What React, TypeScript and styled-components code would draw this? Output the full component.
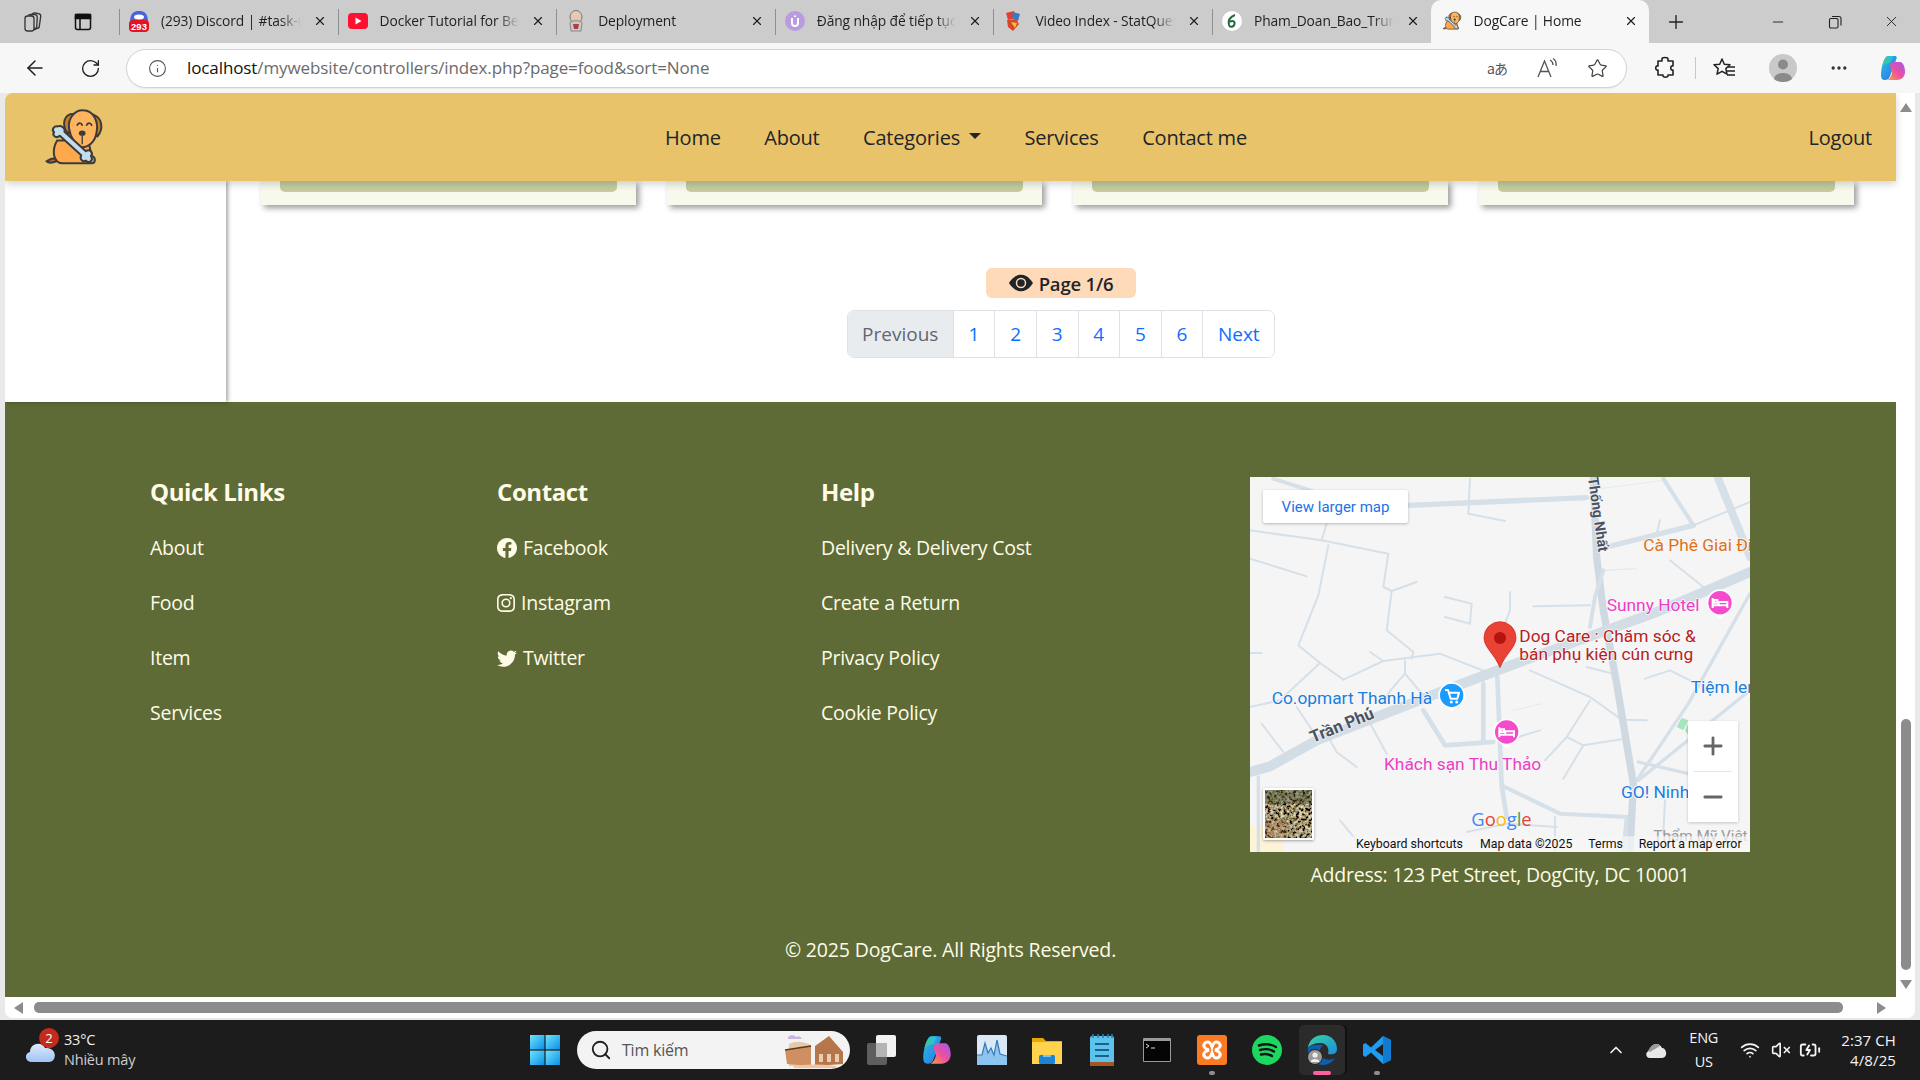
import React from 'react';
import styled, { createGlobalStyle } from 'styled-components';
import { ArrowLeft, RotateCw, Info, Star, Plus, Minus, X, MoreHorizontal, Search, ChevronUp, Wifi, VolumeX, BatteryCharging } from 'lucide-react';
import { BsEyeFill, BsFacebook, BsInstagram, BsTwitter } from 'react-icons/bs';

const UI = `"Open Sans", "Noto Sans", "Noto Sans CJK SC", sans-serif`;

const Global = createGlobalStyle`
  html, body { margin: 0; padding: 0; width: 1920px; height: 1080px; overflow: hidden; background: #1c1c1c; }
  * { box-sizing: border-box; }
`;

const Root = styled.div`
  width: 1920px; height: 1080px; display: flex; flex-direction: column;
  font-family: ${UI}; background: #e9e9e9; overflow: hidden;
`;

/* ---------- tab strip ---------- */
const TabStrip = styled.div`
  height: 43px; background: #cccccc; display: flex; align-items: stretch; flex: none;
`;
const StripTools = styled.div`
  width: 119px; display: flex; align-items: center; padding-left: 22px; gap: 30px; color: #222;
`;
const Tab = styled.div<{ $active?: boolean }>`
  width: 218.6px; display: flex; align-items: center; flex: none;
  padding: 0 11px 2px ${p => (p.$active ? 11 : 10)}px;
  gap: 12px;
  background: ${p => (p.$active ? '#f7f7f7' : 'transparent')};
  border-radius: ${p => (p.$active ? '10px 10px 0 0' : '0')};
  position: relative;
  &::before {
    content: ''; display: ${p => (p.$active ? 'none' : 'block')};
    position: absolute; left: 0; top: 9px; bottom: 8px; width: 1px; background: #8e8e8e;
  }
`;
const TabIcon = styled.span`
  width: 20px; height: 22px; flex: none; display: flex; align-items: center; justify-content: center;
`;
const TabTitle = styled.span`
  flex: 1; min-width: 0; white-space: nowrap; overflow: hidden; font-size: 13.8px; color: #1f1f1f; letter-spacing: -0.1px;
  -webkit-mask-image: linear-gradient(to right, #000 85%, transparent 100%);
`;
const TabClose = styled(X)`
  width: 14px; height: 14px; flex: none; color: #1f1f1f; stroke-width: 2;
`;
const NewTab = styled.div`
  margin-left: 11px; width: 32px; display: flex; align-items: center; justify-content: center; color: #222;
`;
const WindowControls = styled.div`
  margin-left: auto; display: flex;
`;
const WinBtn = styled.div`
  width: 57px; display: flex; align-items: center; justify-content: center; color: #222;
`;

/* ---------- toolbar ---------- */
const Toolbar = styled.div`
  height: 50px; background: #f7f7f7; display: flex; align-items: center; padding-left: 12px; flex: none;
`;
const NavBtn = styled.div<{ $ml?: number }>`
  width: 46px; display: flex; justify-content: center; margin-left: ${p => p.$ml ?? 0}px; color: #1f1f1f;
`;
const Omnibox = styled.div`
  margin-left: 13px; width: 1501px; height: 39px; border: 1px solid #d2d2d2; border-radius: 20px; background: #fff;
  display: flex; align-items: center; padding: 0 14px 0 21px; box-shadow: 0 1px 1px rgba(0,0,0,.05);
`;
const Url = styled.div`
  margin-left: 20px; flex: 1; font-size: 17px; color: #6b6b6b; letter-spacing: -0.1px; white-space: nowrap; padding-bottom: 2px;
  b { font-weight: 400; color: #111; }
`;
const OmniActions = styled.div`
  display: flex; gap: 20px; align-items: center;
`;
const Slot = styled.div<{ $ml?: number }>`
  width: 30px; height: 30px; display: flex; align-items: center; justify-content: center; flex: none;
  margin-left: ${p => p.$ml ?? 0}px; color: #333;
`;
const TranslateGlyph = styled.span`
  font-size: 14px; color: #555; font-family: "Noto Sans CJK JP", "Open Sans", sans-serif; letter-spacing: -1px;
`;
const ToolSep = styled.div`
  width: 1px; height: 22px; background: #c8c8c8; margin-left: 15px; flex: none;
`;

/* ---------- viewport ---------- */
const Viewport = styled.div`
  margin-left: 5px; width: 1910px; height: 925px; flex: none; background: #fff; border-radius: 8px 0 8px 8px;
  display: flex; flex-direction: column; overflow: hidden;
`;
const ViewportRow = styled.div`
  flex: 1; display: flex; min-height: 0;
`;
const Page = styled.div`
  width: 1891px; flex: none; display: flex; flex-direction: column;
`;
const Navbar = styled.nav`
  height: 88px; flex: none; background: #e8c36a; display: flex; align-items: center; padding: 0 24px 0 38px;
  position: relative; z-index: 2; box-shadow: 0 3px 8px rgba(0,0,0,.18);
`;
const NavLinks = styled.div`
  margin-left: 560px; display: flex; align-items: center; gap: 43.5px;
`;
const NavLink = styled.a`
  font-size: 20px; font-weight: 500; color: #212529; white-space: nowrap; display: flex; align-items: center; letter-spacing: -0.2px;
`;
const Caret = styled.span`
  margin-left: 9px; width: 0; height: 0; border-left: 6px solid transparent; border-right: 6px solid transparent; border-top: 6px solid #212529; margin-top: -2px;
`;
const Logout = styled(NavLink)`
  margin-left: auto;
`;

const Main = styled.div`
  height: 221px; flex: none; display: flex;
`;
const Sidebar = styled.aside`
  width: 221px; flex: none; background: #fff; box-shadow: 2px 0 4px rgba(0,0,0,.35); position: relative; z-index: 1;
`;
const Content = styled.div`
  flex: 1; display: flex; flex-direction: column; align-items: center; background: #fff;
`;
const Cards = styled.div`
  align-self: stretch; display: flex; gap: 31px; padding-left: 35px; height: 24px; flex: none;
`;
const Card = styled.div`
  width: 375px; height: 24px; background: #f7f9ec; box-shadow: 3px 3px 6px rgba(0,0,0,.4); padding: 0 19px;
`;
const CardBar = styled.div`
  height: 11px; background: #c5cc9e; border-radius: 0 0 5px 5px;
`;
const PageBadge = styled.div`
  margin-top: 63px; height: 30px; width: 150px; background: #ffdab9; border-radius: 6px; display: flex; align-items: center; justify-content: center; gap: 6px;
  font-size: 18.5px; font-weight: 600; color: #212529; letter-spacing: -0.2px;
`;
const Pager = styled.ul`
  margin: 12px 0 0; padding: 0; list-style: none; display: flex; height: 48px; border: 1px solid #dee2e6; border-radius: 7px; overflow: hidden; background: #fff;
`;
const PageCell = styled.li<{ $off?: boolean; $w: number }>`
  width: ${p => p.$w}px; display: flex; align-items: center; justify-content: center; font-size: 19px;
  color: ${p => (p.$off ? '#5f6770' : '#0d6efd')}; background: ${p => (p.$off ? '#e9ecef' : '#fff')};
  & + & { border-left: 1px solid #dee2e6; }
`;

/* ---------- footer ---------- */
const Footer = styled.footer`
  flex: 1; background: #5e6b37; color: #fffbe6; padding-top: 75px; position: relative; z-index: 0;
`;
const FooterGrid = styled.div`
  display: grid; grid-template-columns: 347px 324px 429px 500px; padding-left: 145px;
`;
const FooterCol = styled.div`
  display: flex; flex-direction: column;
`;
const ColTitle = styled.h5`
  margin: 0 0 29px; font-size: 24px; line-height: 30px; font-weight: 700; letter-spacing: -0.4px; color: #fffbe6;
`;
const ColLinks = styled.div`
  display: flex; flex-direction: column; gap: 31px;
`;
const ColLink = styled.a`
  font-size: 19.5px; line-height: 24px; color: #fffbe6; display: flex; align-items: center; gap: 6px; letter-spacing: -0.25px; white-space: nowrap;
`;
const MapFrame = styled.div`
  width: 500px; height: 375px; position: relative; overflow: hidden; background: #f5f5f5;
`;
const MapSvg = styled.svg`
  display: block; width: 500px; height: 375px;
`;
const LargerMap = styled.div`
  position: absolute; left: 13px; top: 13px; width: 145px; height: 33px; background: #fff; border-radius: 2px;
  box-shadow: 0 1px 3px rgba(0,0,0,.25); display: flex; align-items: center; justify-content: center;
  font: 400 15px Roboto, sans-serif; color: #1a73e8;
`;
const ZoomBox = styled.div`
  position: absolute; left: 438px; top: 244px; width: 50px; height: 101px; background: #fff; box-shadow: 0 1px 3px rgba(0,0,0,.2);
  display: flex; flex-direction: column; align-items: center; color: #666;
`;
const ZoomPart = styled.div`
  flex: 1; display: flex; align-items: center; justify-content: center; width: 100%;
`;
const ZoomRule = styled.div`
  width: 38px; height: 1px; background: #e4e4e4; flex: none;
`;
const SatThumb = styled.div`
  position: absolute; left: 13px; top: 311px; width: 51px; height: 52px; border: 2px solid #fff; border-radius: 2px; box-shadow: 0 1px 3px rgba(0,0,0,.35); overflow: hidden;
`;
const Address = styled.div`
  margin-top: 11px; width: 500px; text-align: center; font-size: 19.5px; line-height: 24px; letter-spacing: -0.25px; white-space: nowrap;
`;
const Copyright = styled.div`
  margin-top: 51px; text-align: center; font-size: 19.5px; line-height: 24px; letter-spacing: -0.15px;
`;

/* ---------- scrollbars ---------- */
const VScroll = styled.div`
  flex: 1; background: #fff; display: flex; flex-direction: column; align-items: center; padding: 10px 0 8px 0;
`;
const VThumb = styled.div`
  width: 10px; height: 251px; background: #8c8c8c; border-radius: 5px; margin-top: auto; margin-bottom: 10px;
`;
const ArrowUp = styled.div`
  width: 0; height: 0; border-left: 6px solid transparent; border-right: 6px solid transparent; border-bottom: 9px solid #8c8c8c;
`;
const ArrowDown = styled.div`
  width: 0; height: 0; border-left: 6px solid transparent; border-right: 6px solid transparent; border-top: 9px solid #8c8c8c;
`;
const HScroll = styled.div`
  height: 21px; flex: none; display: flex; align-items: center; padding: 0 27px 0 9px; background: #fff;
`;
const ArrowLeftTri = styled.div`
  width: 0; height: 0; border-top: 6px solid transparent; border-bottom: 6px solid transparent; border-right: 9px solid #8c8c8c;
`;
const ArrowRightTri = styled.div`
  width: 0; height: 0; border-top: 6px solid transparent; border-bottom: 6px solid transparent; border-left: 9px solid #8c8c8c;
  margin-left: 34px;
`;
const HThumb = styled.div`
  margin-left: 11px; width: 1809px; height: 11px; background: #8c8c8c; border-radius: 5px;
`;

/* ---------- taskbar ---------- */
const Taskbar = styled.div`
  margin-top: 2px; height: 60px; flex: none; background: #1c1c1c; display: flex; align-items: center; color: #fff;
`;
const Weather = styled.div`
  width: 522px; flex: none; display: flex; align-items: center; padding-left: 24px; gap: 6px; position: relative;
`;
const WeatherBadge = styled.span`
  position: absolute; left: 39px; top: -2px; width: 20px; height: 20px; border-radius: 50%; background: #c42b1c; color: #fff;
  font-size: 13px; display: flex; align-items: center; justify-content: center;
`;
const WeatherText = styled.div`
  font-size: 14.5px; line-height: 20px; color: #f2f2f2; letter-spacing: -0.2px;
`;
const WeatherSub = styled.div`
  color: #cfcfcf;
`;
const TaskIcons = styled.div`
  display: flex; align-items: center; gap: 9px;
`;
const TaskSlot = styled.div<{ $active?: boolean }>`
  width: 46px; height: 50px; display: flex; align-items: center; justify-content: center; position: relative; border-radius: 5px;
  background: ${p => (p.$active ? '#2b2b2b' : 'transparent')};
  box-shadow: ${p => (p.$active ? '2px 0 0 #111' : 'none')};
`;
const RunDot = styled.span<{ $active?: boolean }>`
  position: absolute; left: 50%; bottom: 0; transform: translateX(-50%);
  height: 4px; border-radius: 2px; width: ${p => (p.$active ? 18 : 6)}px; background: ${p => (p.$active ? '#ff5fa2' : '#8f8f8f')};
`;
const SearchBox = styled.div`
  width: 273px; height: 38px; border-radius: 19px; background: #f3f3f3; display: flex; align-items: center; padding: 0 5px 0 13px; color: #222;
`;
const SearchLabel = styled.span`
  margin-left: 10px; flex: 1; font-size: 16px; color: #555; letter-spacing: -0.2px;
`;
const Tray = styled.div`
  margin-left: auto; padding-right: 24px; display: flex; align-items: center; color: #f4f4f4;
`;
const TrayItem = styled.div<{ $ml: number }>`
  margin-left: ${p => p.$ml}px; display: flex; align-items: center; justify-content: center;
`;
const Lang = styled.div`
  font-size: 14.5px; line-height: 24px; text-align: center; letter-spacing: -0.2px;
`;
const Clock = styled.div`
  font-size: 15px; line-height: 20px; text-align: right; letter-spacing: 0.1px;
`;

/* ---------- drawings ---------- */
const DogLogo = ({ size = 62 }: { size?: number }) => (
  <svg width={size} height={size * 180 / 185} viewBox="70 50 185 180" style={{ flex: 'none' }}>
    <g stroke="#3b3b3b" strokeWidth="6" strokeLinejoin="round" strokeLinecap="round">
      <path d="M110 212 C95 218 85 216 80 212 C92 204 105 202 115 204 Z" fill="#b5682a" />
      <path d="M112 150 C95 180 100 218 130 218 L215 218 C228 218 228 200 215 195 L205 150 Z" fill="#ffa94d" />
      <path d="M150 72 C128 82 128 112 146 130 C156 110 165 88 166 70 Z" fill="#c97f26" />
      <path d="M218 72 C244 80 254 112 232 138 C222 120 212 90 208 70 Z" fill="#c97f26" />
      <path d="M148 115 C142 80 170 58 190 60 C222 60 236 96 230 125 C226 155 205 170 185 170 C170 165 152 145 148 115 Z" fill="#ffb45f" />
      <path d="M114 108 C103 106 94 118 103 125 C96 136 110 145 120 136 L184 194 C178 206 190 216 198 210 C206 220 222 210 213 197 C222 186 208 174 198 182 L134 124 C138 113 124 104 114 108 Z" fill="#c4dcec" />
      <path d="M172 104 C176 96 184 96 187 104 M200 104 C204 96 212 96 215 104" fill="none" strokeWidth="5" />
      <path d="M187 136 L187 160" fill="none" strokeWidth="4" />
    </g>
    <ellipse cx="187" cy="128" rx="10" ry="8" fill="#3b3b3b" />
  </svg>
);

const SmallDog = () => <DogLogo size={20} />;

const DiscordFav = () => (
  <svg width="20" height="22" viewBox="0 0 20 22">
    <path d="M1 12 C1 3 5 1 10 1 C15 1 19 3 19 12 Z" fill="#4a63d8" />
    <ellipse cx="10" cy="7" rx="5" ry="2.5" fill="#fff" />
    <rect x="0" y="10" width="20" height="12" rx="4" fill="#e81123" />
    <text x="10" y="20" textAnchor="middle" fontSize="9.5" fontWeight="700" fill="#fff" fontFamily="Liberation Sans">293</text>
  </svg>
);
const YoutubeFav = () => (
  <svg width="20" height="16" viewBox="0 0 20 16">
    <rect width="20" height="16" rx="4" fill="#ff0f30" />
    <path d="M7.5 4.5 L13.5 8 L7.5 11.5 Z" fill="#fff" />
  </svg>
);
const JenkinsFav = () => (
  <svg width="18" height="22" viewBox="0 0 18 22">
    <ellipse cx="9" cy="7" rx="6" ry="6.5" fill="#e6c9b5" stroke="#777" />
    <path d="M3 13 C3 10 15 10 15 13 L14 21 L4 21 Z" fill="#c9c9c9" stroke="#888" />
    <path d="M6 14 L12 14 L11 19 L7 19 Z" fill="#b0403a" />
  </svg>
);
const UpFav = () => (
  <svg width="20" height="20" viewBox="0 0 20 20">
    <circle cx="10" cy="10" r="10" fill="#b99be2" />
    <path d="M7 7 V12 A3 3 0 0 0 13 12 V7" fill="none" stroke="#fff" strokeWidth="2" />
    <path d="M10 4.5 V6" stroke="#fff" strokeWidth="2" />
  </svg>
);
const StatFav = () => (
  <svg width="18" height="22" viewBox="0 0 18 22">
    <path d="M2 3 L10 1 L12 8 L4 10 Z" fill="#e0412f" />
    <path d="M9 2 L16 4 L14 11 L8 8 Z" fill="#3a78c9" />
    <path d="M3 10 L12 9 L15 14 L9 21 L4 17 Z" fill="#d9472b" />
    <path d="M7 12 L13 13 L11 18 Z" fill="#f0c331" />
  </svg>
);
const GreenFav = () => (
  <svg width="20" height="20" viewBox="0 0 20 20">
    <circle cx="10" cy="10" r="10" fill="#fff" />
    <path d="M13 4 C8 6 6 10 7 14 C8 17 12 16 12.5 13 C13 10 10 9 8 11" fill="none" stroke="#1f6b3a" strokeWidth="2" />
  </svg>
);
const WorkspaceIcon = () => (
  <svg width="22" height="22" viewBox="0 0 22 22" fill="none" stroke="#333" strokeWidth="1.3">
    <rect x="9" y="2" width="9" height="15" rx="2.5" transform="rotate(8 12 10)" />
    <rect x="6" y="3.5" width="9" height="15" rx="2.5" transform="rotate(3 10 11)" />
    <rect x="3" y="5" width="9" height="15" rx="2.5" fill="#ccc" />
  </svg>
);
const SidebarIcon = () => (
  <svg width="18" height="18" viewBox="0 0 18 18" fill="none" stroke="#111" strokeWidth="1.5">
    <rect x="1.5" y="1.5" width="15" height="15" rx="2" />
    <rect x="1.5" y="1.5" width="15" height="4" fill="#111" />
    <path d="M6 5 V16.5" />
  </svg>
);
const RestoreIcon = () => (
  <svg width="14" height="14" viewBox="0 0 14 14" fill="none" stroke="#222" strokeWidth="1.1">
    <rect x="1.5" y="3.5" width="8.5" height="9.5" rx="1.2" />
    <path d="M4 1.5 H11 A2 2 0 0 1 13 3.5 V10.5" />
  </svg>
);
const ReadAloud = () => (
  <svg width="22" height="22" viewBox="0 0 22 22" fill="none" stroke="#555" strokeWidth="1.3">
    <path d="M2 20 L8.5 4 L15 20 M4.5 14.5 H12.5" />
    <path d="M14 3 C16 4 17 6 17 8 M17 1.5 C19.5 3 20.5 6 20 9" />
  </svg>
);
const ExtensionIcon = () => (
  <svg width="22" height="24" viewBox="0 0 22 24" fill="none" stroke="#222" strokeWidth="1.6" strokeLinejoin="round">
    <path d="M8 3 C8 1 14 1 14 3 L14 5 L19 5 L19 10 C16 9 16 15 19 14 L19 19 L14 19 C15 22 8 22 9 19 L4 19 L4 14 C1 15 1 9 4 10 L4 5 L8 5 Z" />
  </svg>
);
const FavoritesIcon = () => (
  <svg width="24" height="22" viewBox="0 0 24 22" fill="none" stroke="#222" strokeWidth="1.5" strokeLinejoin="round">
    <path d="M9 2 L11.3 7.2 L17 7.8 L12.8 11.6 L14 17.2 L9 14.3 L4 17.2 L5.2 11.6 L1 7.8 L6.7 7.2 Z" />
    <path d="M15 10 H22 M14 14 H22 M14 18 H22" />
  </svg>
);
const Profile = () => (
  <svg width="28" height="28" viewBox="0 0 28 28">
    <circle cx="14" cy="14" r="14" fill="#c9c9c9" />
    <circle cx="14" cy="10.5" r="5" fill="#8a8a8a" />
    <path d="M5 25 C6 17 22 17 23 25 C19 29 9 29 5 25 Z" fill="#8a8a8a" />
  </svg>
);
const CopilotIcon = ({ s = 28, id = 'a' }: { s?: number; id?: string }) => (
  <svg width={s} height={s} viewBox="0 0 28 28">
    <defs>
      <linearGradient id={`cpA${id}`} x1="0" y1="0" x2="1" y2="1"><stop offset="0" stopColor="#22c4e8" /><stop offset="1" stopColor="#2f6fe0" /></linearGradient>
      <linearGradient id={`cpB${id}`} x1="0" y1="1" x2="1" y2="0"><stop offset="0" stopColor="#f9a13a" /><stop offset=".5" stopColor="#ec4fa0" /><stop offset="1" stopColor="#9b5cf0" /></linearGradient>
      <linearGradient id={`cpC${id}`} x1="0" y1="1" x2="1" y2="0"><stop offset="0" stopColor="#4ccf6a" /><stop offset="1" stopColor="#22c4e8" /></linearGradient>
    </defs>
    <path d="M9 2 H16 C18 2 18 4 17 6 L11 22 C10 25 8 26 6 26 C3 26 2 24 2 21 C2 14 5 2 9 2 Z" fill={`url(#cpA${id})`} />
    <path d="M11 11 C12 9 13 8 15 8 L22 8 C25 10 26 14 26 18 C26 23 22 26 18 26 H8 C11 25 12 22 13 19 Z" fill={`url(#cpB${id})`} />
    <path d="M9 2 C6 3 4 8 3 13 C5 10 7 9 11 9 L14 2 Z" fill={`url(#cpC${id})`} opacity=".85" />
  </svg>
);

const Road = ({ d, w = 6, c = '#d6e0e9' }: { d: string; w?: number; c?: string }) => (
  <path d={d} fill="none" stroke={c} strokeWidth={w} strokeLinecap="round" strokeLinejoin="round" />
);

const PoiPin = ({ x, y, fill, kind }: { x: number; y: number; fill: string; kind: 'bed' | 'cart' }) => (
  <g transform={`translate(${x} ${y})`}>
    <path d="M-40 0 A40 40 0 1 1 40 0 C40 22 18 36 0 48 C-18 36 -40 22 -40 0 Z" fill="#fff" />
    <circle r="35" fill={fill} />
    {kind === 'bed' ? (
      <path d="M-22 -14 V16 M-22 8 H22 V16 M22 8 V-2 H-4 V8 M-18 -8 H-8 V0 H-18 Z" fill="none" stroke="#fff" strokeWidth="6" />
    ) : (
      <g>
        <path d="M-20 -16 H-11 L-3 10 H17 L22 -8 H-8" fill="none" stroke="#fff" strokeWidth="6" strokeLinejoin="round" />
        <circle cx="-1" cy="20" r="4.5" fill="#fff" />
        <circle cx="15" cy="20" r="4.5" fill="#fff" />
      </g>
    )}
  </g>
);

const MapLabel = styled.text`
  font-family: Roboto, sans-serif; paint-order: stroke; stroke: #f8f8f8; stroke-width: 5px; stroke-linejoin: round;
`;
const MapFoot = styled.text`
  font-family: Roboto, sans-serif; font-size: 37px; fill: #111;
`;

const MapDrawing = () => (
  <MapSvg viewBox="30 20 1500 1125">
    <rect x="30" y="20" width="1500" height="1125" fill="#f5f5f5" />
    <rect x="30" y="1065" width="100" height="80" fill="#fdf4d8" />
    <path d="M1310 770 L1325 742 L1345 750 L1330 780 Z M1335 780 L1345 760 L1360 770 L1345 795 Z" fill="#a5e6bc" />
    <g>
      <Road d="M505 105 L1040 82" w={16} />
      <Road d="M30 180 L245 210 L445 250 L430 350 L455 362 L530 335" />
      <Road d="M265 225 L235 375 L175 525 L240 578 L310 628" />
      <Road d="M260 160 L245 210" />
      <Road d="M30 265 L200 318" />
      <Road d="M100 25 L240 70" w={12} />
      <Road d="M455 362 L440 480 L520 545 L515 565" />
      <Road d="M30 548 L65 548" />
      <Road d="M240 578 L120 690 L30 710" />
      <Road d="M310 628 L430 572 L600 550 L740 605" />
      <Road d="M390 545 L430 572 M495 570 L495 610 L460 650 L430 690" />
      <Road d="M495 610 L570 700" />
      <Road d="M615 380 L695 400 L690 460 L615 440" />
      <Road d="M810 365 L810 420 L795 460" />
      <Road d="M880 408 L1050 405" />
      <Road d="M690 25 L685 130 L795 152" />
      <Road d="M1040 60 L1270 30" w={3} c="#e6ebf0" />
      <Road d="M1100 230 L1360 165" w={16} />
      <Road d="M1360 165 L1270 25" w={12} />
      <Road d="M1435 25 L1530 260" w={24} />
      <Road d="M1260 150 L1250 190 M1360 165 L1530 95" />
      <Road d="M1290 270 L1390 350" />
      <Road d="M1090 300 L1190 295" w={4} c="#e4e9ee" />
      <Road d="M870 600 L1050 680 L1145 748 L1220 750" />
      <Road d="M1050 690 L980 800 L915 870" />
      <Road d="M980 800 L1030 825 L1155 805" />
      <Road d="M1030 825 L970 925" />
      <Road d="M1215 625 L1290 600 L1350 630" />
      <Road d="M1040 590 L1120 610" />
      <Road d="M730 640 L730 815 M772 620 L785 945 L800 1040" w={14} />
      <Road d="M550 720 L615 825 L760 815" w={14} />
      <Road d="M820 720 L905 700" w={3} c="#e4e9ee" />
      <Road d="M785 945 L960 1030 L1165 1040" w={12} />
      <Road d="M785 815 L900 780" />
      <Road d="M170 710 L230 800 M65 760 L130 845 M380 740 L440 850" />
      <Road d="M270 810 L290 845 L350 890" />
      <Road d="M55 920 L55 1145" w={10} />
      <Road d="M1195 930 L1530 660 M1195 875 L1345 910" w={10} />
      <Road d="M1190 930 L1345 700 L1530 370" w={10} />
      <Road d="M945 1040 L945 1145 M680 1085 L800 1060 L950 1070" />
      <Road d="M1160 1040 L1150 1145" w={12} />
      <Road d="M1275 990 L1270 1090 L1330 1100" />
      <Road d="M300 1050 L350 1110" />
      <Road d="M1060 20 L1070 260 L1090 420 L1130 640 L1180 940 L1170 1145" w={22} c="#cfd9e2" />
      <Road d="M1090 300 L1065 380 L1050 470" w={12} />
      <Road d="M30 905 L90 888 L230 810 L640 650 L840 575 L1250 425 L1530 305" w={30} c="#d3dde6" />
    </g>
    <text x="1044" y="22" transform="rotate(82 1044 22)" fontFamily="Roboto" fontWeight="700" fontSize="43" fill="#4a5260" style={{ paintOrder: 'stroke' }} stroke="#f5f5f5" strokeWidth="4">Thống Nhất</text>
    <text x="218" y="818" transform="rotate(-22 218 818)" fontFamily="Roboto" fontWeight="700" fontSize="50" fill="#4a5260" style={{ paintOrder: 'stroke' }} stroke="#f5f5f5" strokeWidth="4">Trần Phú</text>
    <MapLabel x="1210" y="242" fontSize="52" fill="#e0701a">Cà Phê Giai Đi</MapLabel>
    <MapLabel x="1100" y="422" fontSize="52" fill="#ea3fc4">Sunny Hotel</MapLabel>
    <MapLabel x="838" y="515" fontSize="52" fill="#b8211d">Dog Care : Chăm sóc &amp;</MapLabel>
    <MapLabel x="838" y="568" fontSize="52" fill="#b8211d">bán phụ kiện cún cưng</MapLabel>
    <MapLabel x="95" y="700" fontSize="52" fill="#1a7de0">Co.opmart Thanh Hà</MapLabel>
    <MapLabel x="1352" y="668" fontSize="52" fill="#1a7de0">Tiệm len</MapLabel>
    <MapLabel x="432" y="898" fontSize="52" fill="#ea3fc4">Khách sạn Thu Thảo</MapLabel>
    <MapLabel x="1143" y="982" fontSize="52" fill="#1a7de0">GO! Ninh Hòa</MapLabel>
    <text x="1240" y="1112" fontFamily="Roboto" fontSize="46" fill="#9a9a9a">Thẩm Mỹ Việt</text>
    <PoiPin x={635} y={675} fill="#1a9bff" kind="cart" />
    <PoiPin x={800} y={785} fill="#f54acb" kind="bed" />
    <PoiPin x={1440} y={397} fill="#f54acb" kind="bed" />
    <path d="M780 592 C762 548 732 532 732 502 A48 48 0 1 1 828 502 C828 532 798 548 780 592 Z" fill="#ea4335" stroke="#c5221f" strokeWidth="2" />
    <circle cx="780" cy="503" r="18" fill="#b3140f" />
    <text x="694" y="1066" fontFamily="Open Sans, sans-serif" fontSize="55" fontWeight="500">
      <tspan fill="#4285f4">G</tspan><tspan fill="#ea4335">o</tspan><tspan fill="#fbbc05">o</tspan><tspan fill="#4285f4">g</tspan><tspan fill="#34a853">l</tspan><tspan fill="#ea4335">e</tspan>
    </text>
    <rect x="335" y="1098" width="1195" height="47" fill="#f5f5f5" opacity=".75" />
    <MapFoot x="348" y="1133">Keyboard shortcuts</MapFoot>
    <MapFoot x="720" y="1133">Map data ©2025</MapFoot>
    <MapFoot x="1045" y="1133">Terms</MapFoot>
    <MapFoot x="1196" y="1133">Report a map error</MapFoot>
  </MapSvg>
);

const SatDrawing = () => (
  <svg width="47" height="48" viewBox="0 0 47 48">
    <filter id="sat" x="0" y="0" width="100%" height="100%">
      <feTurbulence type="fractalNoise" baseFrequency="0.32" numOctaves="3" seed="7" />
      <feColorMatrix values="1.7 0.3 0 0 -0.68  1.7 0.3 0 0 -0.72  1.5 0.2 0 0 -0.68  0 0 0 0 1" />
    </filter>
    <rect width="47" height="48" filter="url(#sat)" />
    <rect width="47" height="14" fill="#3f4a2c" opacity=".45" />
    <rect x="0" y="30" width="22" height="18" fill="#b0774a" opacity=".35" />
  </svg>
);

const WinLogo = () => (
  <svg width="30" height="30" viewBox="0 0 30 30">
    <defs>
      <linearGradient id="wl" x1="0" y1="0" x2="1" y2="1"><stop offset="0" stopColor="#6fe3fb" /><stop offset="1" stopColor="#0a8fe8" /></linearGradient>
    </defs>
    <rect x="0" y="0" width="14.4" height="14.4" fill="url(#wl)" />
    <rect x="15.6" y="0" width="14.4" height="14.4" fill="url(#wl)" />
    <rect x="0" y="15.6" width="14.4" height="14.4" fill="url(#wl)" />
    <rect x="15.6" y="15.6" width="14.4" height="14.4" fill="url(#wl)" />
  </svg>
);
const SearchArt = () => (
  <svg width="62" height="36" viewBox="0 0 62 36">
    <path d="M6 12 C14 8 22 10 28 13 L28 34 L6 34 Z" fill="#e9c8a8" />
    <path d="M2 18 L28 14 L28 34 L4 32 Z" fill="#cf8f60" />
    <path d="M2 18 L28 14" stroke="#5a3a24" strokeWidth="1.5" />
    <path d="M32 14 L46 4 L60 20 L60 32 L32 34 Z" fill="#b5764c" />
    <path d="M36 30 h4 v-8 h-4z M44 30 h4 v-8 h-4z M52 30 h4 v-8 h-4z" fill="#e8cdb0" />
    <ellipse cx="32" cy="35" rx="22" ry="2.5" fill="#eec7a0" />
    <path d="M5 5 q4 -4 8 0 q4 -2 6 2 h-14z" fill="#c9b7de" />
  </svg>
);
const TaskView = () => (
  <svg width="30" height="30" viewBox="0 0 30 30">
    <rect x="9" y="0" width="20" height="22" rx="2" fill="#f2f2f2" />
    <rect x="0" y="8" width="20" height="22" rx="2" fill="#5e5e5e" />
    <rect x="9" y="8" width="11" height="14" fill="#b4b4b4" />
  </svg>
);
const MonitorApp = () => (
  <svg width="30" height="30" viewBox="0 0 30 30">
    <rect width="30" height="30" rx="2" fill="#dce9f4" />
    <path d="M0 20 L5 20 L8 8 L11 18 L14 13 L17 20 L20 5 L23 19 L30 21 L30 30 L0 30 Z" fill="#8ec5ee" />
    <path d="M0 20 L5 20 L8 8 L11 18 L14 13 L17 20 L20 5 L23 19 L30 21" fill="none" stroke="#2e7ac4" strokeWidth="1.2" />
  </svg>
);
const FolderApp = () => (
  <svg width="30" height="30" viewBox="0 0 30 30">
    <path d="M0 3 H11 L14 6 H30 V29 H0 Z" fill="#e9a800" />
    <rect x="0" y="7" width="30" height="22" fill="#ffd34d" />
    <rect x="7" y="20" width="16" height="9" rx="1.5" fill="#1d83d4" />
    <rect x="11" y="20" width="8" height="2" fill="#7cc4f4" />
  </svg>
);
const NotepadApp = () => (
  <svg width="24" height="32" viewBox="0 0 24 32">
    <rect x="0" y="2" width="24" height="28" rx="2" fill="#5cc4ec" />
    <rect x="0" y="28" width="24" height="4" fill="#a8561f" />
    <path d="M3 0 V4 M8 0 V4 M13 0 V4 M18 0 V4 M22 0 V4" stroke="#2f7fa8" strokeWidth="1.6" />
    <path d="M5 10 H19 M5 16 H19 M5 22 H19" stroke="#1f5f88" strokeWidth="2.2" />
  </svg>
);
const TerminalApp = () => (
  <svg width="28" height="24" viewBox="0 0 28 24">
    <rect width="28" height="24" rx="1" fill="#9a9a9a" />
    <rect x="1" y="3" width="26" height="20" fill="#050505" />
    <path d="M3 6 L6 8 L3 10" fill="none" stroke="#ddd" strokeWidth="1" />
    <path d="M8 10 H12" stroke="#ddd" strokeWidth="1" />
  </svg>
);
const XamppApp = () => (
  <svg width="30" height="30" viewBox="0 0 30 30">
    <rect width="30" height="30" rx="3" fill="#fb7a24" />
    <path d="M8 8 C12 5 14 9 15 12 C16 9 18 5 22 8 C25 11 22 14 18 15 C22 16 25 19 22 22 C18 25 16 21 15 18 C14 21 12 25 8 22 C5 19 8 16 12 15 C8 14 5 11 8 8 Z" fill="none" stroke="#fff" strokeWidth="3" />
  </svg>
);
const SpotifyApp = () => (
  <svg width="30" height="30" viewBox="0 0 30 30">
    <circle cx="15" cy="15" r="15" fill="#1ed760" />
    <path d="M7 10.5 C13 8.5 19 9 24 12 M8 15 C13 13.5 18 14 22 16.5 M9 19.5 C13 18.5 17 19 20 21" fill="none" stroke="#141414" strokeWidth="2.4" strokeLinecap="round" />
  </svg>
);
const EdgeApp = () => (
  <svg width="32" height="32" viewBox="0 0 32 32">
    <defs>
      <linearGradient id="edA" x1="0" y1="0" x2="1" y2="1"><stop offset="0" stopColor="#36d2a0" /><stop offset="1" stopColor="#1a8fe0" /></linearGradient>
    </defs>
    <path d="M2 14 C3 5 10 1 17 1 C26 1 31 8 31 15 C31 20 26 21 22 20 C24 14 20 9 15 9 C9 9 4 11 2 14 Z" fill="url(#edA)" />
    <path d="M2 14 C1 24 9 31 17 31 C22 31 27 28 29 24 C24 27 16 26 14 20 C13 16 15 13 17 11 C10 10 4 11 2 14 Z" fill="#0d5fb0" />
    <circle cx="9" cy="23" r="7.5" fill="#9a9a9a" stroke="#222" />
    <circle cx="9" cy="21" r="2.6" fill="#eee" />
    <path d="M4.5 28 C5 24 13 24 13.5 28 Z" fill="#eee" />
  </svg>
);
const VSCodeApp = () => (
  <svg width="30" height="30" viewBox="0 0 30 30">
    <path d="M21 1 L29 5 V25 L21 29 L9 17.5 L3.5 22 L1 20.5 V9.5 L3.5 8 L9 12.5 Z M21 9 L13 15 L21 21 Z" fill="#1f9cf0" fillRule="evenodd" />
    <path d="M21 1 L29 5 V25 L21 29 Z" fill="#0a6fc2" opacity=".7" />
  </svg>
);
const CloudWeather = () => (
  <svg width="34" height="30" viewBox="0 0 34 30">
    <defs>
      <linearGradient id="cw" x1="0" y1="0" x2="0" y2="1"><stop offset="0" stopColor="#dfeafd" /><stop offset="1" stopColor="#9ec3f3" /></linearGradient>
    </defs>
    <circle cx="25" cy="8" r="5" fill="#f2a33a" />
    <path d="M7 27 C1 27 0 18 6 17 C6 8 18 6 21 13 C28 12 33 18 30 24 C29 26 27 27 25 27 Z" fill="url(#cw)" />
  </svg>
);
const OneDrive = () => (
  <svg width="22" height="18" viewBox="0 0 22 18">
    <path d="M5 17 C0 17 0 10 5 9.5 C5 3 14 0 17 7 C22 7 23 17 17 17 Z" fill="#e8e8e8" />
    <path d="M3 10 C6 3 13 1 15 5 L5 11 Z" fill="#9a9a9a" />
  </svg>
);

const tabs = [
  { t: '(293) Discord | #task-updates', i: <DiscordFav /> },
  { t: 'Docker Tutorial for Beginners', i: <YoutubeFav /> },
  { t: 'Deployment', i: <JenkinsFav /> },
  { t: 'Đăng nhập để tiếp tục học', i: <UpFav /> },
  { t: 'Video Index - StatQuest!!!', i: <StatFav /> },
  { t: 'Pham_Doan_Bao_Trung_CV', i: <GreenFav /> },
];

const taskApps: { el: React.ReactNode; dot?: boolean; active?: boolean }[] = [
  { el: <TaskView /> },
  { el: <CopilotIcon s={32} id="b" /> },
  { el: <MonitorApp /> },
  { el: <FolderApp /> },
  { el: <NotepadApp /> },
  { el: <TerminalApp /> },
  { el: <XamppApp />, dot: true },
  { el: <SpotifyApp /> },
  { el: <EdgeApp />, active: true },
  { el: <VSCodeApp />, dot: true },
];

const pages = ['1', '2', '3', '4', '5', '6'];

export default function App() {
  return (
    <Root>
      <Global />
      <TabStrip>
        <StripTools><WorkspaceIcon /><SidebarIcon /></StripTools>
        {tabs.map(x => (
          <Tab key={x.t}>
            <TabIcon>{x.i}</TabIcon>
            <TabTitle>{x.t}</TabTitle>
            <TabClose />
          </Tab>
        ))}
        <Tab $active>
          <TabIcon><SmallDog /></TabIcon>
          <TabTitle>DogCare | Home</TabTitle>
          <TabClose />
        </Tab>
        <NewTab><Plus size={22} strokeWidth={1.5} /></NewTab>
        <WindowControls>
          <WinBtn><Minus size={16} strokeWidth={1.4} /></WinBtn>
          <WinBtn><RestoreIcon /></WinBtn>
          <WinBtn><X size={17} strokeWidth={1.3} /></WinBtn>
        </WindowControls>
      </TabStrip>
      <Toolbar>
        <NavBtn><ArrowLeft size={24} strokeWidth={1.5} /></NavBtn>
        <NavBtn $ml={9}><RotateCw size={21} strokeWidth={1.5} /></NavBtn>
        <Omnibox>
          <Info size={19} strokeWidth={1.4} color="#555" />
          <Url><b>localhost</b>/mywebsite/controllers/index.php?page=food&amp;sort=None</Url>
          <OmniActions>
            <Slot><TranslateGlyph>aあ</TranslateGlyph></Slot>
            <Slot><ReadAloud /></Slot>
            <Slot><Star size={21} strokeWidth={1.4} color="#444" /></Slot>
          </OmniActions>
        </Omnibox>
        <Slot $ml={23}><ExtensionIcon /></Slot>
        <ToolSep />
        <Slot $ml={14}><FavoritesIcon /></Slot>
        <Slot $ml={28}><Profile /></Slot>
        <Slot $ml={26}><MoreHorizontal size={20} /></Slot>
        <Slot $ml={24}><CopilotIcon /></Slot>
      </Toolbar>
      <Viewport>
        <ViewportRow>
          <Page>
            <Navbar>
              <DogLogo />
              <NavLinks>
                <NavLink>Home</NavLink>
                <NavLink>About</NavLink>
                <NavLink>Categories<Caret /></NavLink>
                <NavLink>Services</NavLink>
                <NavLink>Contact me</NavLink>
              </NavLinks>
              <Logout>Logout</Logout>
            </Navbar>
            <Main>
              <Sidebar />
              <Content>
                <Cards>
                  {[0, 1, 2, 3].map(i => <Card key={i}><CardBar /></Card>)}
                </Cards>
                <PageBadge><BsEyeFill size={24} />Page 1/6</PageBadge>
                <Pager>
                  <PageCell $off $w={105}>Previous</PageCell>
                  {pages.map(p => <PageCell key={p} $w={41.6}>{p}</PageCell>)}
                  <PageCell $w={72}>Next</PageCell>
                </Pager>
              </Content>
            </Main>
            <Footer>
              <FooterGrid>
                <FooterCol>
                  <ColTitle>Quick Links</ColTitle>
                  <ColLinks>
                    <ColLink>About</ColLink>
                    <ColLink>Food</ColLink>
                    <ColLink>Item</ColLink>
                    <ColLink>Services</ColLink>
                  </ColLinks>
                </FooterCol>
                <FooterCol>
                  <ColTitle>Contact</ColTitle>
                  <ColLinks>
                    <ColLink><BsFacebook size={20} />Facebook</ColLink>
                    <ColLink><BsInstagram size={18} />Instagram</ColLink>
                    <ColLink><BsTwitter size={20} />Twitter</ColLink>
                  </ColLinks>
                </FooterCol>
                <FooterCol>
                  <ColTitle>Help</ColTitle>
                  <ColLinks>
                    <ColLink>Delivery &amp; Delivery Cost</ColLink>
                    <ColLink>Create a Return</ColLink>
                    <ColLink>Privacy Policy</ColLink>
                    <ColLink>Cookie Policy</ColLink>
                  </ColLinks>
                </FooterCol>
                <FooterCol>
                  <MapFrame>
                    <MapDrawing />
                    <LargerMap>View larger map</LargerMap>
                    <ZoomBox>
                      <ZoomPart><Plus size={28} strokeWidth={2.4} /></ZoomPart>
                      <ZoomRule />
                      <ZoomPart><Minus size={28} strokeWidth={2.4} /></ZoomPart>
                    </ZoomBox>
                    <SatThumb><SatDrawing /></SatThumb>
                  </MapFrame>
                  <Address>Address: 123 Pet Street, DogCity, DC 10001</Address>
                </FooterCol>
              </FooterGrid>
              <Copyright>© 2025 DogCare. All Rights Reserved.</Copyright>
            </Footer>
          </Page>
          <VScroll>
            <ArrowUp />
            <VThumb />
            <ArrowDown />
          </VScroll>
        </ViewportRow>
        <HScroll>
          <ArrowLeftTri />
          <HThumb />
          <ArrowRightTri />
        </HScroll>
      </Viewport>
      <Taskbar>
        <Weather>
          <CloudWeather />
          <WeatherBadge>2</WeatherBadge>
          <WeatherText>33°C<WeatherSub>Nhiều mây</WeatherSub></WeatherText>
        </Weather>
        <TaskIcons>
          <TaskSlot><WinLogo /></TaskSlot>
          <SearchBox>
            <Search size={22} strokeWidth={2} />
            <SearchLabel>Tìm kiếm</SearchLabel>
            <SearchArt />
          </SearchBox>
          {taskApps.map((a, i) => (
            <TaskSlot key={i} $active={a.active}>
              {a.el}
              {(a.dot || a.active) && <RunDot $active={a.active} />}
            </TaskSlot>
          ))}
        </TaskIcons>
        <Tray>
          <TrayItem $ml={0}><ChevronUp size={20} /></TrayItem>
          <TrayItem $ml={19}><OneDrive /></TrayItem>
          <TrayItem $ml={22}><Lang>ENG<br />US</Lang></TrayItem>
          <TrayItem $ml={22}><Wifi size={20} /></TrayItem>
          <TrayItem $ml={11}><VolumeX size={20} /></TrayItem>
          <TrayItem $ml={8}><BatteryCharging size={22} /></TrayItem>
          <TrayItem $ml={20}><Clock>2:37 CH<br />4/8/25</Clock></TrayItem>
        </Tray>
      </Taskbar>
    </Root>
  );
}
